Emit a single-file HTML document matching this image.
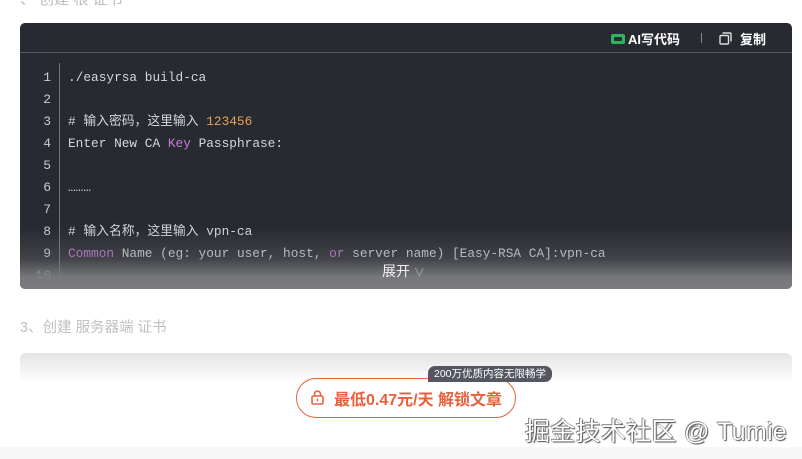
<!DOCTYPE html>
<html><head><meta charset="utf-8"><style>
*{margin:0;padding:0;box-sizing:border-box}
body{width:802px;height:459px;background:#fff;position:relative;overflow:hidden;font-family:"Liberation Sans","Noto Sans CJK SC",sans-serif}
.top{position:absolute;left:20px;top:-12px;color:#bbb;font-size:15px}
.code{position:absolute;left:20px;top:23px;width:772px;height:266px;background:#282a31;border-radius:5px;overflow:hidden}
.hd{height:30px;border-bottom:1px solid #55585f;position:relative;color:#fff;font-size:13px;font-weight:bold}
.ai{position:absolute;left:591px;top:6px;display:flex;align-items:center;gap:3px}
.ai i{display:inline-block;width:14px;height:10px;background:#2bb55c;border-radius:2px;position:relative}
.ai i:after{content:"";position:absolute;left:3px;top:3px;width:8px;height:4px;background:#282a31;border-radius:1px}
.sep{position:absolute;left:681px;top:10px;width:1px;height:10px;background:#888}
.cp{position:absolute;left:699px;top:6px;display:flex;align-items:center;gap:8px}
.cp svg{width:13px;height:13px}
.ln{position:absolute;left:0;top:44px;width:31px;text-align:right;font-family:"Liberation Mono",monospace;font-size:13px;color:#ccc;line-height:22px}
.bar{position:absolute;left:39px;top:40px;width:1px;height:230px;background:#777}
.src{position:absolute;left:48px;top:44px;font-family:"Liberation Mono","Noto Sans CJK SC",monospace;font-size:12.8px;color:#d4d6da;line-height:22px;white-space:pre}
.k{color:#c678dd}.n{color:#e5a15c}
.fade{position:absolute;left:0;top:205px;width:772px;height:61px;background:linear-gradient(rgba(110,112,116,0),rgba(110,112,116,.35) 50%,rgba(122,123,126,.95) 80%,#7a7b7e)}
.more{position:absolute;left:362px;top:238px;color:#f2f2f2;font-size:14px}
.more span{color:#aaa;font-size:11px}
.h3{position:absolute;left:20px;top:316px;color:#c0c0c0;font-size:14.5px}
.shade{position:absolute;left:20px;top:353px;width:772px;height:30px;background:linear-gradient(#e4e4e4,#fff);border-radius:6px 6px 0 0}
.btn{position:absolute;left:296px;top:378px;width:220px;height:40px;border:1.5px solid #e8603c;border-radius:20px;background:#fff;color:#e8603c;font-weight:bold;font-size:16px;display:flex;align-items:center;padding-left:37px}
.lock{position:absolute;left:14px;top:11px;width:13px;height:15px}
.badge{position:absolute;left:428px;top:366px;width:124px;height:16px;background:#545660;color:#fff;font-size:10.5px;line-height:16px;text-align:center;border-radius:7px 7px 7px 0}
.wm{position:absolute;left:525px;top:412px;font-size:25px;color:#fff;text-shadow:0 0 1px #333,1px 1px 1px #555,-1px -1px 0 #999;letter-spacing:.3px}
.bot{position:absolute;left:0;top:447px;width:802px;height:12px;background:#f7f7f7}
</style></head><body>
<div class="top">、 创建 根 证书</div>
<div class="code">
<div class="hd"><div class="ai"><i></i>AI写代码</div><div class="sep"></div><div class="cp"><svg viewBox="0 0 13 13"><rect x="1" y="3.5" width="8.5" height="8.5" rx="1" fill="none" stroke="#ddd" stroke-width="1.4"/><path d="M3.5 1h7.5a1 1 0 0 1 1 1v7.5" fill="none" stroke="#ddd" stroke-width="1.4"/></svg>复制</div></div>
<div class="bar"></div>
<div class="ln">1<br>2<br>3<br>4<br>5<br>6<br>7<br>8<br>9<br>10</div>
<div class="src">./easyrsa build-ca

# 输入密码，这里输入 <span class="n">123456</span>
Enter New CA <span class="k">Key</span> Passphrase:

………

# 输入名称，这里输入 vpn-ca
<span class="k">Common</span> Name (eg: your user, host, <span class="k">or</span> server name) [Easy-RSA CA]:vpn-ca</div>
<div class="fade"></div>
<div class="more">展开 <span>∨</span></div>
</div>
<div class="h3">3、创建 服务器端 证书</div>
<div class="shade"></div>
<div class="btn"><svg class="lock" viewBox="0 0 13 15"><rect x="1" y="6" width="11" height="8" rx="1.5" fill="none" stroke="#e8603c" stroke-width="1.6"/><path d="M3.5 6V4a3 3 0 0 1 6 0v2" fill="none" stroke="#e8603c" stroke-width="1.6"/><rect x="5.8" y="8.5" width="1.4" height="3" fill="#e8603c"/></svg>最低0.47元/天 解锁文章</div>
<div class="badge">200万优质内容无限畅学</div>
<div class="bot"></div>
<div class="wm">掘金技术社区 @ Tumie</div>
</body></html>
